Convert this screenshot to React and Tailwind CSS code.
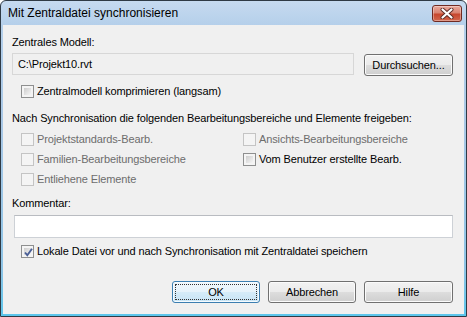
import React from "react";

const FONT = "[font-family:'Liberation_Sans',Arial,sans-serif]";

const Checkbox = ({ checked = false, disabled = false }) => {
  if (disabled) {
    return (
      <span className="block w-[13px] h-[13px] shrink-0 border border-[#c4c4c4] bg-[#f4f4f4]" />
    );
  }
  return (
    <span className="relative block w-[13px] h-[13px] shrink-0 border border-[#8e8f8f] bg-[#f4f4f4] p-[2px]">
      <span className="block h-full w-full bg-gradient-to-br from-[#cdcdcd] to-[#f6f6f6]" />
      {checked && (
        <svg className="absolute left-[1px] top-[1px]" width="11" height="11" viewBox="0 0 11 11">
          <path d="M2 5.5 L4.3 8.2 L9 1.8" fill="none" stroke="#4a5f96" strokeWidth="1.9" />
        </svg>
      )}
    </span>
  );
};

const CheckRow = ({ label, checked, disabled, className = "" }) => (
  <div className={`flex items-center h-[15px] gap-[3px] ${className}`}>
    <Checkbox checked={checked} disabled={disabled} />
    <span className={disabled ? "text-[#6d6d6d]" : "text-black"}>{label}</span>
  </div>
);

const Button = ({ children, primary = false, className = "" }) => (
  <div
    className={`relative h-[22px] flex items-center justify-center rounded-[3px] border ${
      primary
        ? "border-[#3c7fb1] bg-[linear-gradient(to_bottom,#f1f8fd_0%,#e6f3fb_50%,#d6ecf9_50%,#c7e4f5_100%)] shadow-[inset_0_0_0_1px_#f5fbff]"
        : "border-[#707070] bg-[linear-gradient(to_bottom,#f2f2f2_0%,#ebebeb_50%,#dddddd_50%,#cfcfcf_100%)] shadow-[inset_0_0_0_1px_#fbfbfb]"
    } ${className}`}
  >
    {primary && (
      <span className="absolute inset-[2px] border border-dotted border-[#333]" />
    )}
    <span className="relative">{children}</span>
  </div>
);

const CloseButton = () => (
  <div className="w-[30px] h-[17px] rounded-[3px] border border-[#6f2a22] bg-[linear-gradient(to_bottom,#e9a99c_0%,#d98371_45%,#c7462d_55%,#d2674e_100%)] shadow-[inset_0_0_0_1px_rgba(255,255,255,0.35)] flex items-center justify-center">
    <svg width="14" height="11" viewBox="0 0 14 11">
      <path d="M2.5 1.5 L11.5 9.5 M11.5 1.5 L2.5 9.5" stroke="#5a2a25" strokeWidth="4" strokeLinecap="round" />
      <path d="M2.5 1.5 L11.5 9.5 M11.5 1.5 L2.5 9.5" stroke="#ffffff" strokeWidth="2.2" strokeLinecap="round" />
    </svg>
  </div>
);

export default function App() {
  return (
    <div className={`w-[467px] h-[317px] bg-white text-[11px] leading-[15px] tracking-[-0.12px] ${FONT}`}>
      <div className="h-full flex flex-col border border-[#2f3a45] rounded-t-[6px] bg-[linear-gradient(to_bottom,#c6daf0_0%,#b4cfea_8%,#a9c8e6_40%,#8ec4e6_85%,#5cc6ec_100%)]">
        <div className="h-[24px] flex items-center justify-between pl-[7px] pr-[4px]">
          <span className="text-[12px] tracking-normal text-black pt-[1px]">Mit Zentraldatei synchronisieren</span>
          <CloseButton />
        </div>

        <div className="flex-1 mx-[2px] mb-[2px] bg-[#f0f0f0] flex flex-col pl-[9px] pr-[11px] pt-[10px]">
          <div>Zentrales Modell:</div>

          <div className="flex items-start gap-[10px] mt-[3px]">
            <div className="flex-1 h-[22px] border border-[#d7d7d7] bg-[#f0f0f0] flex items-center pl-[5px]">
              C:\Projekt10.rvt
            </div>
            <Button className="w-[89px] mt-[1px]">Durchsuchen...</Button>
          </div>

          <CheckRow className="mt-[8px] ml-[9px]" label="Zentralmodell komprimieren (langsam)" />

          <div className="mt-[12px]">
            Nach Synchronisation die folgenden Bearbeitungsbereiche und Elemente freigeben:
          </div>

          <div className="grid grid-cols-[222px_1fr] gap-y-[5px] mt-[6px] ml-[9px]">
            <CheckRow disabled label="Projektstandards-Bearb." />
            <CheckRow disabled label="Ansichts-Bearbeitungsbereiche" />
            <CheckRow disabled label="Familien-Bearbeitungsbereiche" />
            <CheckRow label="Vom Benutzer erstellte Bearb." />
            <CheckRow disabled label="Entliehene Elemente" />
          </div>

          <div className="mt-[9px]">Kommentar:</div>

          <div className="h-[23px] mt-[4px] ml-[2px] border border-[#cdd1d6] border-t-[#b9bcc1] bg-white" />

          <CheckRow className="mt-[6px] ml-[9px]" checked label="Lokale Datei vor und nach Synchronisation mit Zentraldatei speichern" />

          <div className="flex justify-end gap-[8px] mt-[22px]">
            <Button primary className="w-[88px]">OK</Button>
            <Button className="w-[88px]">Abbrechen</Button>
            <Button className="w-[89px]">Hilfe</Button>
          </div>
        </div>
      </div>
    </div>
  );
}
